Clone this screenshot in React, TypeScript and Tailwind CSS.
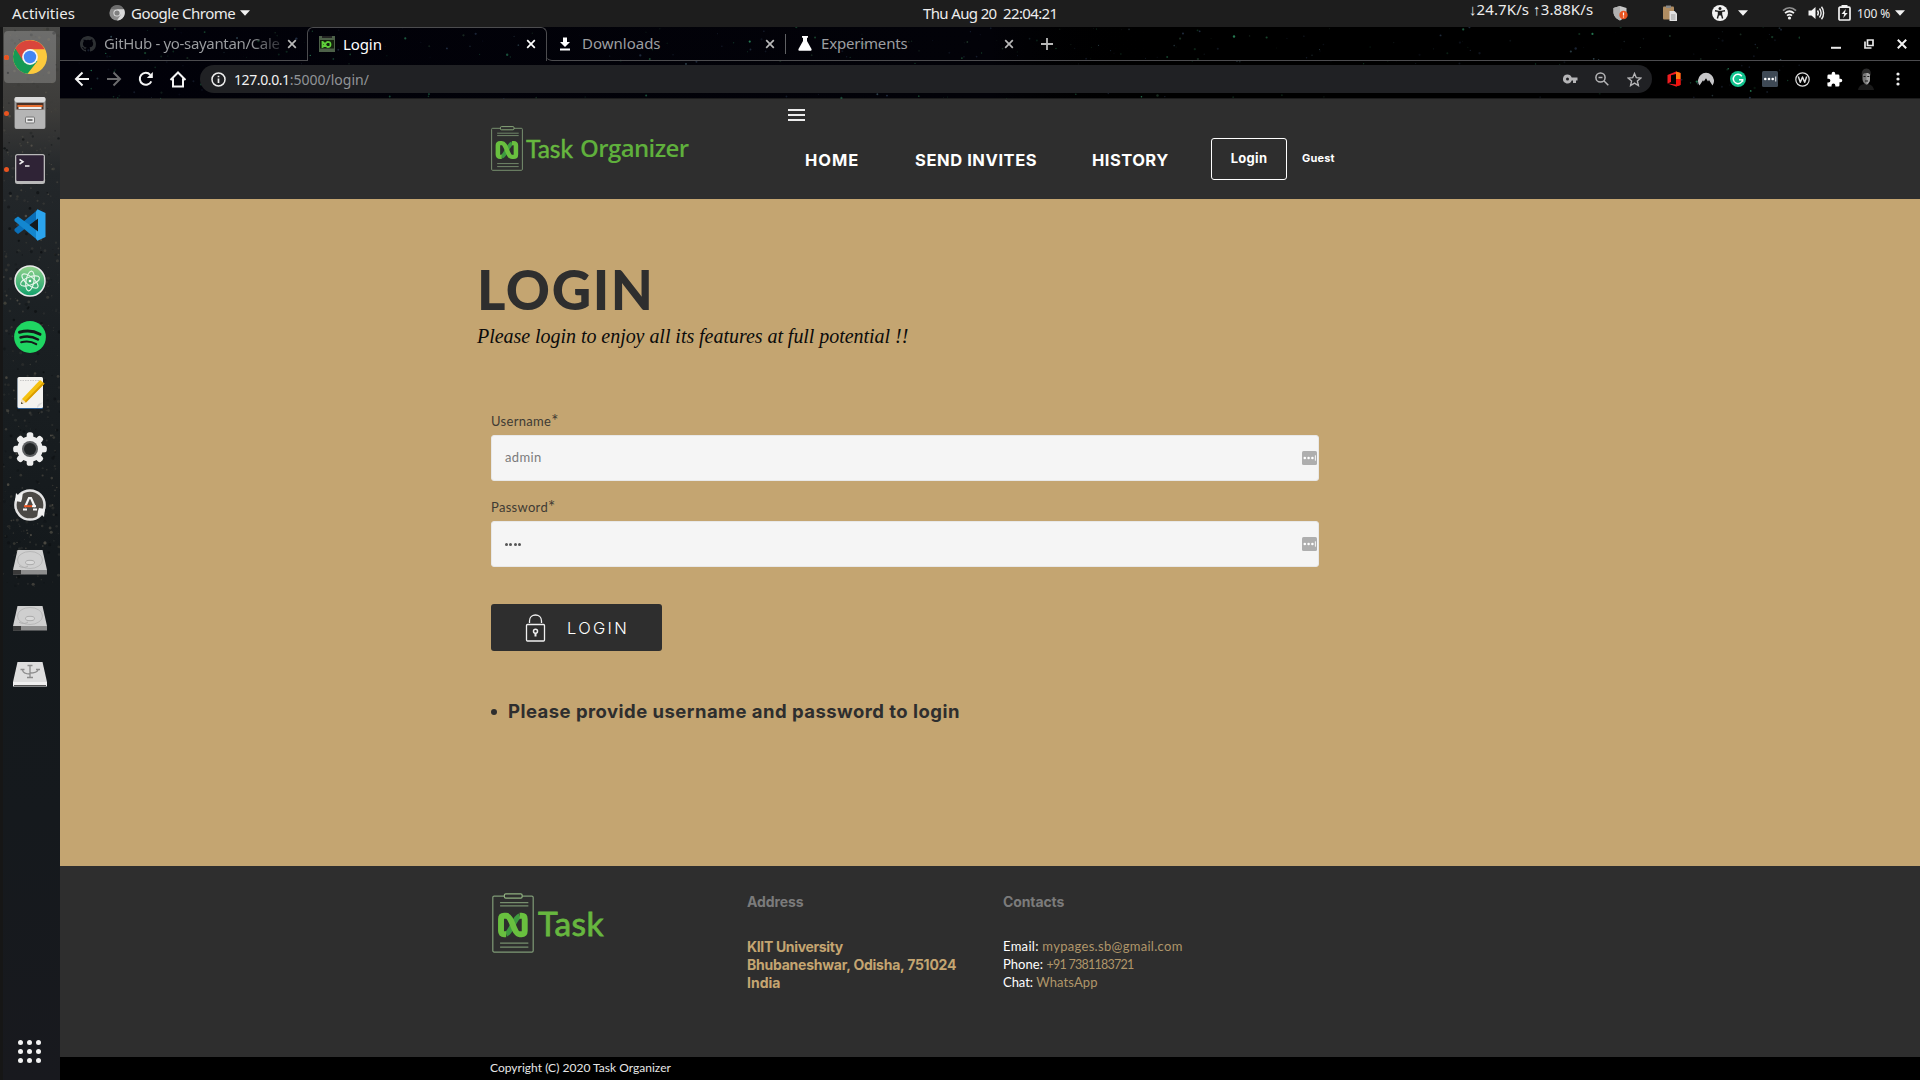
import type { ReactNode } from 'react';

const NOTO = "font-['Noto_Sans',sans-serif]";
const LATO = "font-['Lato',sans-serif]";

function Speckles({ w, h, n, seed, colors, max }: { w: number; h: number; n: number; seed: number; colors: string[]; max: number }) {
  let s = seed;
  const rnd = () => {
    s = (s * 16807) % 2147483647;
    return s / 2147483647;
  };
  const dots = Array.from({ length: n }, () => ({
    x: rnd() * w,
    y: rnd() * h,
    r: 0.4 + rnd() * max,
    o: 0.2 + rnd() * 0.6,
    c: colors[Math.floor(rnd() * colors.length)],
  }));
  return (
    <svg className="pointer-events-none absolute inset-0" width={w} height={h} viewBox={`0 0 ${w} ${h}`}>
      {dots.map((d, i) => (
        <circle key={i} cx={d.x} cy={d.y} r={d.r} fill={d.c} opacity={d.o} />
      ))}
    </svg>
  );
}

function Caret() {
  return (
    <svg width="10" height="6" viewBox="0 0 10 6">
      <path d="M0 0.3h10L5 5.8z" fill="#f2f2f2" />
    </svg>
  );
}

function TopBar() {
  return (
    <div className={`${NOTO} relative flex h-[27px] shrink-0 items-center bg-[#1d1d1d] pb-px text-[15px] leading-[26px] text-[#ececec]`}>
      <span className="ml-3 w-[97px] tracking-[0.05px]">Activities</span>
      <svg className="shrink-0" width="16" height="16" viewBox="0 0 16 16">
        <circle cx="8" cy="8" r="7.6" fill="#8b8b8b" />
        <path d="M8 4h7a8 8 0 0 1-7 11.6l3.6-5.6z" fill="#d8d8d8" />
        <path d="M1.5 4A7.6 7.6 0 0 1 15 4.3H8z" fill="#6d6d6d" />
        <circle cx="8" cy="8" r="3.6" fill="#ddd" />
        <circle cx="8" cy="8" r="2.6" fill="#808080" />
      </svg>
      <span className="ml-[6px] w-[109px] whitespace-nowrap tracking-[-0.5px]">Google Chrome</span>
      <Caret />
      <span className="ml-[673px] w-[140px] whitespace-pre tracking-[-0.64px]">Thu Aug 20&nbsp; 22:04:21</span>
      <span className="ml-[406px] -mt-2 w-[144px] whitespace-nowrap tracking-[0.1px]">↓24.7K/s ↑3.88K/s</span>
      <svg width="16" height="16" viewBox="0 0 16 16">
        <path d="M7 1l6.500 2v4c0 4-3 7-6.500 8.500C3.500 14 .5 11 .5 7V3z" fill="#c9c9c9" />
        <path d="M7 1v14.500C3.500 14 .5 11 .5 7V3z" fill="#b0b0b0" />
        <circle cx="10.500" cy="10" r="4.200" fill="#e95420" />
        <path d="M10.500 7.500v3M10.500 11.500v1" stroke="#fff" strokeWidth="1.200" />
      </svg>
      <svg className="ml-[33px]" width="16" height="16" viewBox="0 0 16 16">
        <rect x="1" y="1.500" width="11" height="13" rx="1" fill="#b08d62" />
        <rect x="4" y="0.500" width="5" height="2.500" fill="#888" />
        <path d="M7.500 6h5l2.500 2.500V16H7.500z" fill="#e3e3e3" />
        <path d="M9 10h4.500M9 12h4.500M9 14h4.500" stroke="#8a8a8a" strokeWidth=".8" />
      </svg>
      <svg className="ml-[34px]" width="16" height="16" viewBox="0 0 16 16">
        <circle cx="8" cy="8" r="8" fill="#f2f2f2" />
        <circle cx="8" cy="3.400" r="1.500" fill="#1d1d1d" />
        <path d="M3 5.800l3.500.6h3L13 5.800M6.500 6.400v3L5.400 13.500M9.500 6.400v3l1.100 4.100" stroke="#1d1d1d" strokeWidth="1.400" fill="none" />
        <path d="M6.200 6.200h3.600v4.300H6.200z" fill="#1d1d1d" />
      </svg>
      <span className="ml-[10px] flex"><Caret /></span>
      <svg className="ml-[34px]" width="15" height="14" viewBox="0 0 15 14">
        <path d="M1 4.600c4-3.800 9-3.800 13 0" stroke="#8f8f8f" strokeWidth="1.700" fill="none" />
        <path d="M3 7.200c3-2.600 6-2.600 9 0M5 9.600c1.700-1.400 3.300-1.400 5 0" stroke="#f2f2f2" strokeWidth="1.700" fill="none" />
        <circle cx="7.500" cy="12" r="1.600" fill="#f2f2f2" />
      </svg>
      <svg className="ml-[11px]" width="17" height="16" viewBox="0 0 17 16">
        <path d="M0.500 5.500h3l4-3.500v12l-4-3.500h-3z" fill="#f2f2f2" />
        <path d="M9.500 5.500c1 1.500 1 3.500 0 5M11.500 3.500c2 2.800 2 6.200 0 9M13.500 1.800c2.800 3.600 2.800 8.800 0 12.400" stroke="#f2f2f2" strokeWidth="1.400" fill="none" />
      </svg>
      <svg className="ml-[13px]" width="13" height="16" viewBox="0 0 13 16">
        <rect x="1" y="2.200" width="11" height="12.800" rx="1" stroke="#f2f2f2" strokeWidth="1.700" fill="none" />
        <rect x="3.500" y="0" width="6" height="2.500" fill="#f2f2f2" />
        <path d="M7.800 4L3.500 9h2.700l-1 4 4.500-5H7z" fill="#f2f2f2" />
      </svg>
      <span className="ml-[6px] mt-px w-[38px] whitespace-nowrap text-[12px] tracking-[-0.1px]">100 %</span>
      <Caret />
    </div>
  );
}

function Disk({ usb }: { usb?: boolean }) {
  return (
    <svg className="mt-[2px]" width="36" height="36" viewBox="0 0 36 36">
      <path d="M5.500 6h25L35 26H1z" fill={usb ? '#dedede' : '#cfcfcf'} />
      <path d="M1 26h34v4.500H1z" fill={usb ? '#f0f0f0' : '#8d8d8d'} />
      {usb ? (
        <>
          <path d="M2 29.500h32" stroke="#555" strokeWidth="1" />
          <g stroke="#8c8c8c" strokeWidth="1.300" fill="none">
            <path d="M18 10v11M18 18c-4 0-7-1-7.500-4M18 17c4 0 7-.5 8-3M15 21.500h6M15.500 9.500h5M8.500 13.500h4M24 13.500h4" />
          </g>
        </>
      ) : (
        <>
          <path d="M1 26h8v4.500H1z" fill="#3a3a3a" />
          <ellipse cx="18" cy="16" rx="12.500" ry="8.500" fill="none" stroke="#b4b4b4" strokeWidth="0.900" />
          <ellipse cx="18" cy="18.500" rx="4.500" ry="2.200" fill="#d9d9d9" stroke="#a5a5a5" strokeWidth="0.900" />
          <path d="M7 22c3 2 6 2 9 0" stroke="#adadad" strokeWidth="0.900" fill="none" />
        </>
      )}
    </svg>
  );
}

const dockIcons: { icon: ReactNode; running?: boolean; active?: boolean }[] = [
  {
    running: true,
    active: true,
    icon: (
      <svg width="34" height="34" viewBox="0 0 34 34">
        <circle cx="17" cy="17" r="17" fill="#fbc93d" />
        <path d="M17 17L2.300 8.500A17 17 0 0 0 14.500 33.800L24.400 21.200z" fill="#159a55" />
        <path d="M17 9.200h14.900A17 17 0 0 0 2.300 8.500L10.200 21z" fill="#d9453b" />
        <circle cx="17" cy="17" r="7.900" fill="#f4f4f4" />
        <circle cx="17" cy="17" r="6.200" fill="#4285f4" />
      </svg>
    ),
  },
  {
    running: true,
    icon: (
      <svg width="32" height="34" viewBox="0 0 32 34">
        <rect x="0.500" y="1" width="31" height="32" rx="2" fill="#9d9d9d" />
        <rect x="0.500" y="1" width="31" height="5" rx="2" fill="#dcdcdc" />
        <rect x="2.500" y="7" width="27" height="8" fill="#4b3228" />
        <rect x="3.500" y="9" width="25" height="2" fill="#e87033" />
        <rect x="4.500" y="11" width="23" height="2" fill="#eee" />
        <rect x="1" y="13.500" width="30" height="19" rx="1.500" fill="#b5b5b5" />
        <rect x="11.500" y="21" width="9" height="6" rx="1" fill="#e8e8e8" stroke="#777" />
        <rect x="13.500" y="23" width="5" height="2" fill="#777" />
      </svg>
    ),
  },
  {
    running: true,
    icon: (
      <svg width="30" height="30" viewBox="0 0 30 30">
        <rect width="30" height="30" rx="2.500" fill="#b9b9b9" />
        <rect x="1.300" y="1.300" width="27.400" height="25.700" rx="1" fill="#2f2336" />
        <path d="M4.500 5.500l3.500 2.200-3.500 2.300M10 12h4.500" stroke="#eee" strokeWidth="1.500" fill="none" />
      </svg>
    ),
  },
  {
    icon: (
      <svg width="32" height="32" viewBox="0 0 32 32">
        <path d="M24 0.500V10L4 25l-3.500-3v-2z" fill="#0a6fb8" />
        <path d="M24 31.500V22L4 7.500L0.500 10v2z" fill="#1387d0" />
        <path d="M23.500 0.300L31.500 4v24l-8 3.700-1.500-2V2.500z" fill="#2ba4ee" />
        <path d="M24 9.500v13L15.500 16z" fill="#141a1e" />
      </svg>
    ),
  },
  {
    icon: (
      <svg width="32" height="32" viewBox="0 0 32 32">
        <defs>
          <linearGradient id="atom" x1="0" y1="0" x2="0" y2="1">
            <stop offset="0" stopColor="#93d38d" />
            <stop offset="1" stopColor="#12a06b" />
          </linearGradient>
        </defs>
        <circle cx="16" cy="16" r="15" fill="url(#atom)" stroke="#ececec" strokeWidth="1.500" />
        <g fill="none" stroke="#e6f6ea" strokeWidth="1.100">
          <ellipse cx="16" cy="16" rx="10" ry="4" transform="rotate(-20 16 16)" />
          <ellipse cx="16" cy="16" rx="10" ry="4" transform="rotate(40 16 16)" />
          <ellipse cx="16" cy="16" rx="10" ry="4" transform="rotate(100 16 16)" />
        </g>
        <circle cx="16" cy="16" r="1.300" fill="#fff" />
      </svg>
    ),
  },
  {
    icon: (
      <svg width="32" height="32" viewBox="0 0 32 32">
        <circle cx="16" cy="16" r="15.900" fill="#1fd662" />
        <g fill="none" stroke="#15191a" strokeLinecap="round">
          <path d="M5.500 11.300c7-2 14.500-1.300 20.500 2" strokeWidth="3" />
          <path d="M6.500 16.500c6-1.700 12.300-1 17.500 2" strokeWidth="2.500" />
          <path d="M7.200 21.300c5-1.300 10.500-.8 15 1.800" strokeWidth="2.100" />
        </g>
      </svg>
    ),
  },
  {
    icon: (
      <svg width="30" height="34" viewBox="0 0 30 34">
        <rect x="2.500" y="2" width="25.500" height="31" rx="1.500" fill="#2d5f96" />
        <rect x="2.500" y="1" width="25.500" height="31" rx="1.500" fill="#f3f2ef" />
        <path d="M5 4.500h20" stroke="#bbb" strokeWidth=".8" strokeDasharray="1.500 1" />
        <path d="M6 28l1-5L25 4l4.500 3.500L11 26.500z" fill="#f5c211" />
        <path d="M9.500 25.500L28 6.500l1.500 1.200L11 26.500z" fill="#d99b00" />
        <path d="M6 28l1-5 4 3.500z" fill="#eddcc0" />
        <path d="M6 28l.4-2 1.600 1.400z" fill="#222" />
        <path d="M22 32c0-4 2-5 6-5.500z" fill="#dcdcdc" />
      </svg>
    ),
  },
  {
    icon: (
      <svg width="34" height="34" viewBox="0 0 34 34">
        {[0, 45, 90, 135].map((a) => (
          <rect key={a} x="13.700" y="0.200" width="6.600" height="33.600" rx="2.600" fill="#eeeeee" transform={`rotate(${a} 17 17)`} />
        ))}
        <circle cx="17" cy="17" r="12.800" fill="#eeeeee" />
        <circle cx="17" cy="17" r="8" fill="#5e6062" />
        <circle cx="17" cy="17" r="6" fill="#222526" />
      </svg>
    ),
  },
  {
    icon: (
      <svg width="32" height="34" viewBox="0 0 32 34">
        <circle cx="16" cy="17" r="14.600" fill="#4b4945" stroke="#e3e3e3" strokeWidth="2.500" />
        <path d="M1 13l1-8 2.500 2.500L9 4l-1 7-1 3zM31 21l-1 8-2.500-2.500L23 30l1-7 1-3z" fill="#f1f1f1" />
        <path d="M11 19l4-9h2l4 9M9 21.500h4M19 21.500h4" stroke="#f5f5f5" strokeWidth="2.200" fill="none" />
        <path d="M10 18.200h8" stroke="#e95420" strokeWidth="2" />
        <path d="M18 18.200h4" stroke="#f5f5f5" strokeWidth="2" />
      </svg>
    ),
  },
  { icon: <Disk /> },
  { icon: <Disk /> },
  { icon: <Disk usb /> },
];

function Dock() {
  return (
    <div className="relative flex w-[60px] shrink-0 flex-col overflow-hidden border-l-[3px] border-[#161616] bg-[linear-gradient(to_bottom,#4a4a48_0%,#3c3b39_8%,#23272a_14%,#1a1f22_30%,#14191c_50%,#15191d_75%,#18191e_100%)]">
      <Speckles w={57} h={560} n={520} seed={77} colors={['#5a564c', '#3b3c39', '#4a4840', '#0c0f11']} max={1.2} />
      <div className="relative flex flex-1 flex-col pt-[2px]">
        {dockIcons.map((d, i) => (
          <div key={i} className="flex h-14 items-center">
            <span className={d.running ? 'ml-px h-[5px] w-[5px] rounded-full bg-[#e95420]' : 'ml-px h-[5px] w-[5px]'} />
            <div className={d.active ? '-ml-[5px] flex h-[52px] w-[52px] items-center justify-center rounded-[4px] bg-white/20' : '-ml-[5px] flex h-[52px] w-[52px] items-center justify-center'}>
              {d.icon}
            </div>
            {d.active && <span className="-ml-[52px] h-[5px] w-[5px] rounded-full bg-[#e95420]" />}
          </div>
        ))}
      </div>
      <div className="relative mb-[17px] ml-[15px] grid w-[23px] grid-cols-3 gap-x-[4px] gap-y-[4px]">
        {Array.from({ length: 9 }, (_, i) => (
          <span key={i} className="h-[5px] w-[5px] rounded-full bg-[#f3f3f3]" />
        ))}
      </div>
    </div>
  );
}

function Close({ bright }: { bright?: boolean }) {
  return (
    <svg className="shrink-0" width="10" height="10" viewBox="0 0 10 10">
      <path d="M1.200 1.200l7.600 7.600M8.800 1.200L1.200 8.800" stroke={bright ? '#ffffff' : '#b9b9b9'} strokeWidth="1.700" />
    </svg>
  );
}

function TabStrip() {
  return (
    <div className={`${NOTO} relative flex h-[34px] shrink-0 items-stretch text-[15px] leading-[33px] text-[#9c9ea1]`}>
      <div className="flex w-[248px] items-center border-b border-[#4c4c4f] pl-5">
        <svg className="shrink-0" width="16" height="16" viewBox="0 0 16 16">
          <path fill="#2d3033" d="M8 0C3.580 0 0 3.580 0 8c0 3.540 2.290 6.530 5.470 7.590.4.070.55-.17.55-.38v-1.490c-2.010.37-2.530-.49-2.690-.94-.09-.23-.48-.94-.82-1.130-.28-.15-.68-.52-.01-.53.63-.01 1.080.58 1.230.82.72 1.210 1.870.87 2.330.66.07-.52.28-.87.51-1.070-1.780-.2-3.640-.89-3.640-3.950 0-.87.31-1.590.82-2.150-.08-.2-.36-1.020.08-2.120 0 0 .67-.21 2.200.82a7.500 7.500 0 0 1 4 0c1.530-1.040 2.200-.82 2.200-.82.44 1.100.16 1.920.08 2.120.51.56.82 1.270.82 2.150 0 3.070-1.870 3.750-3.650 3.950.29.25.54.73.54 1.480v2.200c0 .21.15.46.55.38A8 8 0 0 0 16 8c0-4.420-3.580-8-8-8z" />
        </svg>
        <span className="ml-[8px] w-[178px] overflow-hidden bg-linear-to-r from-[#9c9ea1] from-82% to-[#9c9ea1]/25 bg-clip-text whitespace-nowrap text-transparent tracking-[-0.33px]">
          GitHub - yo-sayantan/Cale
        </span>
        <span className="ml-[5px] flex"><Close /></span>
      </div>
      <div className="-ml-px flex w-[240px] items-center rounded-t-[6px] border border-b-0 border-[#4c4c4f] pb-px pl-[11px] text-white">
        <svg className="shrink-0" width="16" height="16" viewBox="0 0 16 16">
          <rect width="16" height="16" fill="#4d6149" />
          <rect x="3" y="0" width="10" height="2" fill="#222" />
          <rect x="1" y="4" width="14" height="8.500" fill="#15230f" />
          <path d="M3.500 6v5c2 0 3-5 5-5s3 0 3 2.500-1 2.500-3 2.500-3-5-5-5z" fill="none" stroke="#5fd13a" strokeWidth="1.800" />
        </svg>
        <span className="ml-[8px] w-[183px] tracking-[-0.1px]">Login</span>
        <Close bright />
      </div>
      <div className="-ml-px flex flex-1 items-center rounded-bl-[6px] border-b border-[#4c4c4f] pl-[13px]">
        <svg className="shrink-0" width="12" height="14" viewBox="0 0 12 14">
          <path d="M4 0.500h4V5h3L6 10 1 5h3zM1 11.500h10v2H1z" fill="#fff" />
        </svg>
        <span className="ml-[11px] w-[183px]">Downloads</span>
        <Close />
        <span className="ml-[10px] h-5 w-px bg-[#606164]" />
        <svg className="ml-[12px] shrink-0" width="14" height="15" viewBox="0 0 14 15">
          <path d="M4 0h6v1.800H9V5l4.500 8c.4 1-.1 1.800-1 1.800h-11c-.9 0-1.400-.8-1-1.800L5 5V1.800H4z" fill="#fff" />
        </svg>
        <span className="ml-[9px] w-[183px] tracking-[-0.17px]">Experiments</span>
        <Close />
        <svg className="ml-[27px]" width="12" height="12" viewBox="0 0 12 12">
          <path d="M6 0v12M0 6h12" stroke="#b8b8b8" strokeWidth="1.800" />
        </svg>
        <svg className="mr-[23px] ml-auto" width="10" height="10" viewBox="0 0 10 10">
          <path d="M0 8.800h10" stroke="#e8e8e8" strokeWidth="2" />
        </svg>
        <svg className="mr-[23px]" width="10" height="10" viewBox="0 0 10 10">
          <path d="M3.500 1h5.500v5.500H3.500zM1 2.500V9h6.500" stroke="#e8e8e8" strokeWidth="1.700" fill="none" />
        </svg>
        <svg className="mr-[13px]" width="10" height="10" viewBox="0 0 10 10">
          <path d="M0.800 0.800l8.400 8.400M9.200 0.800L0.800 9.200" stroke="#f2f2f2" strokeWidth="2" />
        </svg>
      </div>
    </div>
  );
}

function Cell({ children }: { children: ReactNode }) {
  return <span className="flex w-8 items-center justify-center">{children}</span>;
}

function Toolbar() {
  return (
    <div className={`${NOTO} relative flex h-[37px] shrink-0 items-center pb-px pl-[6px] text-[14px]`}>
      <Cell>
        <svg width="16" height="16" viewBox="0 0 16 16" fill="none" stroke="#f4f4f4" strokeWidth="2"><path d="M15 8H2M8.500 1.500L2 8l6.500 6.500" /></svg>
      </Cell>
      <Cell>
        <svg width="16" height="16" viewBox="0 0 16 16" fill="none" stroke="#6c6c6e" strokeWidth="2"><path d="M1 8h13M7.500 1.500L14 8l-6.500 6.500" /></svg>
      </Cell>
      <Cell>
        <svg width="16" height="16" viewBox="0 0 16 16" fill="none"><path d="M13.300 10.300A6 6 0 1 1 12.300 3.800" stroke="#f4f4f4" strokeWidth="2" /><path d="M14.800 1v6h-6z" fill="#f4f4f4" /></svg>
      </Cell>
      <Cell>
        <svg width="18" height="17" viewBox="0 0 18 17" fill="none" stroke="#f4f4f4" strokeWidth="2"><path d="M1.500 9L9 1.500 16.500 9M4 7.500V15.500h10V7.500" /></svg>
      </Cell>
      <div className="ml-[6px] flex h-7 w-[1452px] items-center rounded-full bg-[#202124] pl-[11px]">
        <svg width="15" height="15" viewBox="0 0 15 15" fill="none" stroke="#eee" strokeWidth="1.500"><circle cx="7.500" cy="7.500" r="6.500" /><path d="M7.500 6.500V11M7.500 3.800v1.500" strokeWidth="1.700" /></svg>
        <span className="ml-[8px] tracking-[-0.4px] text-[#f2f2f2]">127.0.0.1</span>
        <span className="flex-1 text-[#919498]">:5000/login/</span>
        <Cell>
          <svg width="15" height="10" viewBox="0 0 15 10"><path fillRule="evenodd" d="M4.500.5a4.500 4.500 0 1 0 4.200 6H10V9h3V6.500h1.500v-3H8.700A4.500 4.500 0 0 0 4.500.5zm0 3a1.500 1.500 0 1 1 0 3 1.500 1.500 0 0 1 0-3z" fill="#b5b5b7" /></svg>
        </Cell>
        <Cell>
          <svg width="14" height="14" viewBox="0 0 14 14" fill="none" stroke="#b5b5b7" strokeWidth="1.500"><circle cx="5.500" cy="5.500" r="4.600" /><path d="M8.800 8.800L13.300 13.300M3.500 5.500h4" /></svg>
        </Cell>
        <Cell>
          <svg width="15" height="15" viewBox="0 0 15 15" fill="none" stroke="#b5b5b7" strokeWidth="1.400"><path d="M7.500 1.500l1.800 4.200 4.500.4-3.400 3 1 4.400-3.900-2.400-3.900 2.400 1-4.400-3.400-3 4.500-.4z" /></svg>
        </Cell>
        <span className="w-[2px]" />
      </div>
      <span className="w-[6px]" />
      <Cell>
        <svg width="14" height="16" viewBox="0 0 14 16"><path d="M0.500 4L9 0.500 13.500 2v12L9 15.500 0.500 12.500 9 13.500V3L4 4.200v6.800L.5 12.500z" fill="#ef1c20" /><path d="M9 .5L13.500 2v6H9z" fill="#ff7a12" /><path d="M9 8h4.500v6L9 15.500z" fill="#f0130c" /></svg>
      </Cell>
      <Cell>
        <svg width="16" height="14" viewBox="0 0 16 14"><path d="M1.500 13.500A8 8 0 1 1 14.500 13.500L11 8l-1 1.500L8 6.200 5.800 9.500 5 8.300z" fill="#c6c6c8" /></svg>
      </Cell>
      <Cell>
        <svg width="16" height="16" viewBox="0 0 16 16"><circle cx="8" cy="8" r="8" fill="#11c28d" /><path d="M11.800 5.200A4.700 4.700 0 1 0 12.600 8.800H9M12.600 8.800v2" stroke="#fff" strokeWidth="1.500" fill="none" /></svg>
      </Cell>
      <Cell>
        <svg width="16" height="16" viewBox="0 0 16 16"><rect width="16" height="16" rx="1.500" fill="#3e4955" /><g fill="#fff"><circle cx="3.300" cy="8" r="1.300" /><circle cx="7" cy="8" r="1.300" /><circle cx="10.700" cy="8" r="1.300" /><rect x="13.300" y="5.500" width=".9" height="5" /></g></svg>
      </Cell>
      <Cell>
        <svg width="15" height="15" viewBox="0 0 15 15" fill="none" stroke="#dedede"><circle cx="7.500" cy="7.500" r="6.700" strokeWidth="1.200" /><path d="M3.300 4.500l2 5.700 2.200-5.200 2.200 5.200 2-5.700" strokeWidth="1.500" strokeLinejoin="round" /></svg>
      </Cell>
      <Cell>
        <svg width="17" height="17" viewBox="0 0 24 24"><path fill="#fff" d="M20.500 11H19V7a2 2 0 0 0-2-2h-4V3.500a2.500 2.500 0 0 0-5 0V5H4a2 2 0 0 0-2 2v3.800h1.500a2.700 2.700 0 0 1 0 5.400H2V20a2 2 0 0 0 2 2h3.800v-1.500a2.700 2.700 0 0 1 5.400 0V22H17a2 2 0 0 0 2-2v-4h1.500a2.500 2.500 0 0 0 0-5z" /></svg>
      </Cell>
      <Cell>
        <svg width="18" height="22" viewBox="0 0 18 22"><path d="M1 22c1-5 4-6 8-6s7 1 8 6z" fill="#1a1a1a" /><path d="M5.500 6c0-3 7.500-3 7.500 0v5c0 3-2 5.500-3.500 5.500S5.500 14 5.500 11z" fill="#777" /><path d="M9.500 4H12c1 0 1 2 1 4v3c0 2-1.500 5-3.500 5.500z" fill="#a5a5a5" /><path d="M5 8c-1-4 1-7.500 4.500-7.500S14.500 4 13.500 8C13 5.500 11.500 5 9 5S6 6 5 8z" fill="#2b2b2b" /><path d="M6.500 8.500h2M10.300 8.500h2M8 13h3" stroke="#1b1b1b" strokeWidth="1.200" /></svg>
      </Cell>
      <Cell>
        <svg width="4" height="14" viewBox="0 0 4 14" fill="#eee"><circle cx="2" cy="2" r="1.600" /><circle cx="2" cy="7" r="1.600" /><circle cx="2" cy="12" r="1.600" /></svg>
      </Cell>
    </div>
  );
}

function Mark({ className }: { className: string }) {
  return (
    <svg className={className} viewBox="0 0 31.200 45" preserveAspectRatio="none">
      <g fill="none" stroke="#7f9a76" strokeWidth="0.900">
        <rect x="0.600" y="2.300" width="30" height="42" rx="1" />
        <path d="M6 7.200h21M6 9.600h21M6 37.600h21M6 40.600h21" opacity=".9" />
        <rect x="9.200" y="0.600" width="13.200" height="3.200" rx="1" fill="#2e2e2e" stroke="#8fb07f" />
      </g>
      <path d="M10.500 30.700c4-1.500 6-12 10-13.400" fill="none" stroke="#3d9a3f" strokeWidth="4" />
      <path d="M10.500 30.900H9c-1.600 0-2.300-.8-2.300-2.400v-9c0-1.600.7-2.400 2.300-2.400h1.500c4.500 0 5.500 13.800 10 13.800H22c1.600 0 2.300-.8 2.300-2.400v-9c0-1.600-.7-2.400-2.300-2.400h-1.500" fill="none" stroke="#69c03f" strokeWidth="4.400" />
    </svg>
  );
}

function Header() {
  return (
    <header className="flex h-[100px] shrink-0 bg-[#2e2e2e] pl-[431px] text-white">
      <div className="mt-[27px] flex w-[297px] items-start">
        <Mark className="h-[45px] w-[32px] shrink-0" />
        <span className={`${LATO} mt-[7px] ml-[3px] w-[54px] text-[24.500px] leading-[32px] text-[#67b73f] [-webkit-text-stroke:0.500px_#67b73f]`}>Task</span>
        <span className="mt-[6px] font-['Open_Sans',sans-serif] text-[24px] leading-[32px] font-semibold tracking-[-0.620px] text-[#5fb03c]">Organizer</span>
      </div>
      <div className="flex flex-col">
        <div className="mt-[9px] flex h-[14px] w-[17px] flex-col justify-between py-px">
          <span className="h-[2px] bg-[#ededed]" />
          <span className="h-[2px] bg-[#ededed]" />
          <span className="h-[2px] bg-[#ededed]" />
        </div>
        <nav className="mt-4 flex h-[42px] items-center text-[16.500px] leading-5 font-bold whitespace-nowrap">
          <span className="mt-px ml-[17px] w-[110px] tracking-[0.950px]">HOME</span>
          <span className="mt-px w-[177px] tracking-[0.580px]">SEND INVITES</span>
          <span className="mt-px w-[119px] tracking-[0.480px]">HISTORY</span>
          <span className="flex h-[42px] w-[76px] items-center justify-center rounded-[3px] border border-white pb-[3px] text-[13px] tracking-[0.300px]">Login</span>
          <span className="mb-[3px] ml-[15px] text-[11px] tracking-[0.200px]">Guest</span>
        </nav>
      </div>
    </header>
  );
}

function Field({ label, children }: { label: string; children: ReactNode }) {
  return (
    <label className="flex flex-col">
      <span className="flex h-[22px] items-center text-[13px] tracking-[0.300px] text-[#3f3b34]">
        {label}
        <span className="-mt-[4px] text-[17px] leading-none">*</span>
      </span>
      <span className="mt-[2px] flex h-[46px] w-[828px] items-center rounded-[3px] border border-[#e8e8e8] bg-[#f5f5f5] pr-px pl-[13px] text-[13px] text-[#7b7b7b]">
        {children}
        <svg className="ml-auto" width="15" height="14" viewBox="0 0 15 14">
          <rect width="15" height="14" rx="1.500" fill="#aeaeae" />
          <g fill="#fff"><circle cx="2.800" cy="7" r="1.300" /><circle cx="6.600" cy="7" r="1.300" /><circle cx="10.400" cy="7" r="1.300" /><rect x="12.900" y="4.300" width=".9" height="5.400" /></g>
        </svg>
      </span>
    </label>
  );
}

function LoginForm() {
  return (
    <main className="flex h-[667px] shrink-0 flex-col bg-[#c4a571] pl-[417px]">
      <h1 className={`${LATO} mt-[60px] h-[60px] text-[54.500px] leading-[60px] font-black tracking-[1.600px] text-[#2e2e2e]`}>LOGIN</h1>
      <p className="mt-[3px] h-7 font-['Liberation_Serif',serif] text-[20px] leading-7 text-[#0b0b0b] italic tracking-[-0.040px]">
        Please login to enjoy all its features at full potential !!
      </p>
      <div className={`${LATO} mt-[61px] ml-[14px] flex flex-col items-start`}>
        <Field label="Username">
          <span className="tracking-[0.350px]">admin</span>
        </Field>
        <div className="mt-[16px]">
          <Field label="Password">
            <span className="flex gap-[1.400px]">
              <i className="h-[3px] w-[3px] rounded-full bg-[#555]" />
              <i className="h-[3px] w-[3px] rounded-full bg-[#555]" />
              <i className="h-[3px] w-[3px] rounded-full bg-[#555]" />
              <i className="h-[3px] w-[3px] rounded-full bg-[#555]" />
            </span>
          </Field>
        </div>
        <button className="mt-[37px] flex h-[47px] w-[171px] items-center rounded-[3px] bg-[#2e2e2e] pl-[34px] text-white">
          <svg width="21" height="28" viewBox="0 0 21 28" fill="none" stroke="#f0f0f0" strokeWidth="1.300">
            <rect x="1.500" y="10.500" width="18" height="16.500" rx="1" />
            <path d="M4.500 9V7c0-8 12-8 12 0v2" />
            <circle cx="10.500" cy="17.300" r="2" strokeWidth="1.500" />
            <path d="M10.500 19v3.500" strokeWidth="2" />
          </svg>
          <span className="ml-[21px] font-['Inter',sans-serif] text-[16.500px] leading-6 font-light tracking-[2.300px]">LOGIN</span>
        </button>
      </div>
      <ul className="mt-[48px] ml-[14px] flex h-6 items-center text-[18.500px] leading-6 font-bold tracking-[0.460px] text-[#2e2e2e]">
        <li className="flex items-center">
          <span className="mt-[2px] mr-[11px] h-[6px] w-[6px] rounded-full bg-[#2e2e2e]" />
          Please provide username and password to login
        </li>
      </ul>
    </main>
  );
}

function Footer() {
  return (
    <>
      <footer className="flex h-[191px] shrink-0 bg-[#2e2e2e] pl-[431px]">
        <div className="mt-[27px] flex w-[256px] items-start">
          <Mark className="ml-px h-[60px] w-[42px] shrink-0" />
          <span className={`${LATO} mt-[8px] ml-[4px] text-[33.500px] leading-[44px] tracking-[0.500px] text-[#67b73f] [-webkit-text-stroke:0.800px_#67b73f]`}>Task</span>
        </div>
        <div className="w-[256px] pt-[26px] text-[14px] leading-[18px] font-bold text-[#c4a571]">
          <h5 className="h-5 leading-5 tracking-[-0.100px] text-[#7b7b7b]">Address</h5>
          <div className="mt-[26px] flex flex-col">
            <span className="tracking-[-0.340px]">KIIT University</span>
            <span className="tracking-[-0.240px]">Bhubaneshwar, Odisha, 751024</span>
            <span>India</span>
          </div>
        </div>
        <div className="pt-[26px]">
          <h5 className="h-5 text-[14px] leading-5 font-bold tracking-[-0.100px] text-[#7b7b7b]">Contacts</h5>
          <div className={`${LATO} mt-[25px] flex flex-col text-[13px] leading-[18px] text-white`}>
            <span className="h-[18px] tracking-[0.300px]">Email: <span className="text-[#b0966a]">mypages.sb@gmail.com</span></span>
            <span className="h-[18px] tracking-[0.050px]">Phone: <span className="text-[12.500px] tracking-[-0.750px] text-[#b0966a]">+91 7381183721</span></span>
            <span className="h-[18px] tracking-[-0.050px]">Chat: <span className="tracking-[0.100px] text-[#b0966a]">WhatsApp</span></span>
          </div>
        </div>
      </footer>
      <div className={`${LATO} h-[23px] shrink-0 bg-black pl-[430px] text-[12px] leading-[22px] tracking-[0.020px] text-[#e6e6e6]`}>Copyright (C) 2020 Task Organizer</div>
    </>
  );
}

export default function App() {
  return (
    <div className="flex h-[1080px] w-[1920px] flex-col overflow-hidden bg-black font-['Inter',sans-serif]">
      <TopBar />
      <div className="flex min-h-0 flex-1">
        <Dock />
        <div className="flex w-[1860px] flex-col">
          <div className="relative flex h-[72px] shrink-0 flex-col bg-linear-to-r from-[#010109] via-[#020208] via-50% to-black to-60%">
            <Speckles w={1740} h={72} n={420} seed={4242} colors={['#1f5a3a', '#2b3a52', '#24402f', '#3f5a66', '#1a2233', '#2f9a68']} max={0.8} />
            <TabStrip />
            <Toolbar />
            <div className="h-px bg-[#1c1c1c]" />
          </div>
          <Header />
          <LoginForm />
          <Footer />
        </div>
      </div>
    </div>
  );
}
